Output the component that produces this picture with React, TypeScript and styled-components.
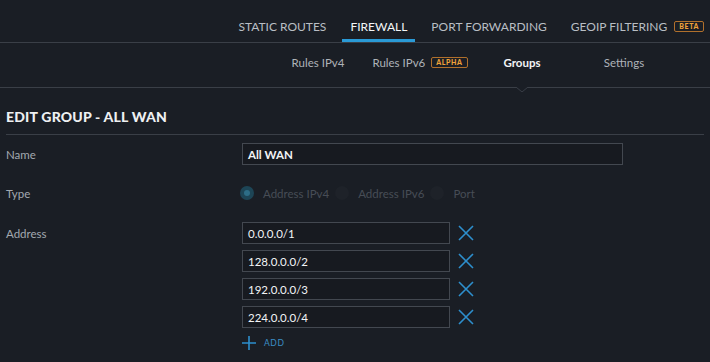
import React from "react";
import styled, { createGlobalStyle } from "styled-components";

const Global = createGlobalStyle`
  html, body { margin: 0; padding: 0; background: #1a1e25; }
  body { font-family: Lato, "Open Sans", sans-serif; color: #c3c7cc; }
  * { box-sizing: border-box; }
`;

const Page = styled.div`
  width: 710px;
  height: 362px;
  background: #1a1e25;
  overflow: hidden;
`;

const TopNav = styled.nav`
  height: 43px;
  border-bottom: 1px solid #3a3f47;
  display: flex;
  justify-content: flex-end;
  align-items: stretch;
`;

const TopItem = styled.div<{ $active?: boolean }>`
  margin: 0 4px;
  padding: 13px 8px 0;
  display: flex;
  align-items: center;
  gap: 7px;
  font-size: 12px;
  color: ${(p) => (p.$active ? "#f4f6f8" : "#b9bec4")};
  font-weight: 400;
  border-bottom: 3px solid ${(p) => (p.$active ? "#2a9ad6" : "transparent")};
  &:last-child {
    padding-right: 2px;
  }
`;

const Badge = styled.span`
  display: inline-flex;
  align-items: center;
  justify-content: center;
  height: 11px;
  padding: 0 4px;
  border: 1px solid #b0702c;
  border-radius: 2px;
  font-size: 7px;
  font-weight: 900;
  letter-spacing: 0.6px;
  color: #f0a23a;
  line-height: 1;
`;

const SubNav = styled.nav`
  height: 45px;
  border-bottom: 1px solid #3a3f47;
  display: grid;
  grid-template-columns: repeat(4, 102px);
  justify-content: end;
  padding-right: 35px;
`;

const SubItem = styled.div<{ $active?: boolean }>`
  position: relative;
  display: flex;
  align-items: center;
  justify-content: center;
  gap: 6px;
  font-size: 11.5px;
  color: ${(p) => (p.$active ? "#f2f4f6" : "#aeb3b9")};
  font-weight: ${(p) => (p.$active ? 700 : 400)};
  padding-bottom: 5px;
`;

const Caret = styled.svg`
  position: absolute;
  left: 50%;
  bottom: -5px;
  transform: translateX(-50%);
`;

const Content = styled.section`
  padding: 0 6px;
`;

const Heading = styled.h1`
  margin: 0;
  height: 47px;
  padding-top: 20px;
  font-size: 14px;
  font-weight: 900;
  letter-spacing: 0.2px;
  color: #eef0f2;
  border-bottom: 1px solid #3a3f47;
`;

const Form = styled.div`
  display: grid;
  grid-template-columns: 236px 1fr;
  padding-top: 8px;
`;

const Label = styled.div<{ $top?: number }>`
  font-size: 11.5px;
  color: #a3a9b0;
  padding-top: ${(p) => p.$top ?? 0}px;
`;

const Field = styled.div<{ $bottom?: number }>`
  padding-bottom: ${(p) => p.$bottom ?? 0}px;
`;

const TextBox = styled.div<{ $width: number; $bold?: boolean }>`
  width: ${(p) => p.$width}px;
  height: 22px;
  border: 1px solid #434850;
  background: #171a20;
  display: flex;
  align-items: center;
  padding-left: 5px;
  font-size: 11.5px;
  font-weight: ${(p) => (p.$bold ? 700 : 400)};
  color: #f2f4f6;
`;

const RadioRow = styled.div`
  display: flex;
  align-items: center;
  height: 22px;
  margin-left: -2px;
`;

const RadioOpt = styled.div`
  display: flex;
  align-items: center;
  gap: 9px;
  margin-right: 6px;
  font-size: 11.5px;
  color: #474d56;
`;

const RadioDot = styled.span<{ $on?: boolean }>`
  width: 14px;
  height: 14px;
  border-radius: 50%;
  background: ${(p) => (p.$on ? "#1d4556" : "#1e2229")};
  display: flex;
  align-items: center;
  justify-content: center;
  &::after {
    content: "";
    width: 6px;
    height: 6px;
    border-radius: 50%;
    background: ${(p) => (p.$on ? "#2d6d86" : "transparent")};
  }
`;

const AddrList = styled.div`
  display: flex;
  flex-direction: column;
  gap: 6px;
`;

const AddrRow = styled.div`
  display: flex;
  align-items: center;
  gap: 8px;
`;

const IconBtn = styled.span`
  display: flex;
  width: 16px;
  height: 16px;
`;

const AddBtn = styled.div`
  display: flex;
  align-items: center;
  gap: 8px;
  margin-top: 8px;
  font-size: 8.5px;
  letter-spacing: 0.6px;
  color: #3a8ec6;
`;

const XIcon = () => (
  <svg width="16" height="16" viewBox="0 0 16 16">
    <path d="M1 1 L15 15 M15 1 L1 15" stroke="#2d8fcd" strokeWidth="1.6" fill="none" />
  </svg>
);

const PlusIcon = () => (
  <svg width="14" height="14" viewBox="0 0 14 14">
    <path d="M7 0 V14 M0 7 H14" stroke="#2d8fcd" strokeWidth="1.6" fill="none" />
  </svg>
);

const addresses = ["0.0.0.0/1", "128.0.0.0/2", "192.0.0.0/3", "224.0.0.0/4"];

export default function App() {
  return (
    <Page>
      <Global />
      <TopNav>
        <TopItem>STATIC ROUTES</TopItem>
        <TopItem $active>FIREWALL</TopItem>
        <TopItem>PORT FORWARDING</TopItem>
        <TopItem>
          GEOIP FILTERING <Badge>BETA</Badge>
        </TopItem>
      </TopNav>
      <SubNav>
        <SubItem>Rules IPv4</SubItem>
        <SubItem>
          Rules IPv6 <Badge>ALPHA</Badge>
        </SubItem>
        <SubItem $active>
          Groups
          <Caret width="12" height="5" viewBox="0 0 12 5">
            <path d="M0 0 L6 5 L12 0" stroke="#3a3f47" strokeWidth="1" fill="#1a1e25" />
          </Caret>
        </SubItem>
        <SubItem>Settings</SubItem>
      </SubNav>
      <Content>
        <Heading>EDIT GROUP - ALL WAN</Heading>
        <Form>
          <Label $top={5}>Name</Label>
          <Field $bottom={17}>
            <TextBox $width={381} $bold>All WAN</TextBox>
          </Field>
          <Label $top={5}>Type</Label>
          <Field $bottom={18}>
            <RadioRow>
              <RadioOpt>
                <RadioDot $on />
                Address IPv4
              </RadioOpt>
              <RadioOpt>
                <RadioDot />
                Address IPv6
              </RadioOpt>
              <RadioOpt>
                <RadioDot />
                Port
              </RadioOpt>
            </RadioRow>
          </Field>
          <Label $top={5}>Address</Label>
          <Field>
            <AddrList>
              {addresses.map((a) => (
                <AddrRow key={a}>
                  <TextBox $width={208}>{a}</TextBox>
                  <IconBtn>
                    <XIcon />
                  </IconBtn>
                </AddrRow>
              ))}
            </AddrList>
            <AddBtn>
              <PlusIcon />
              ADD
            </AddBtn>
          </Field>
        </Form>
      </Content>
    </Page>
  );
}
